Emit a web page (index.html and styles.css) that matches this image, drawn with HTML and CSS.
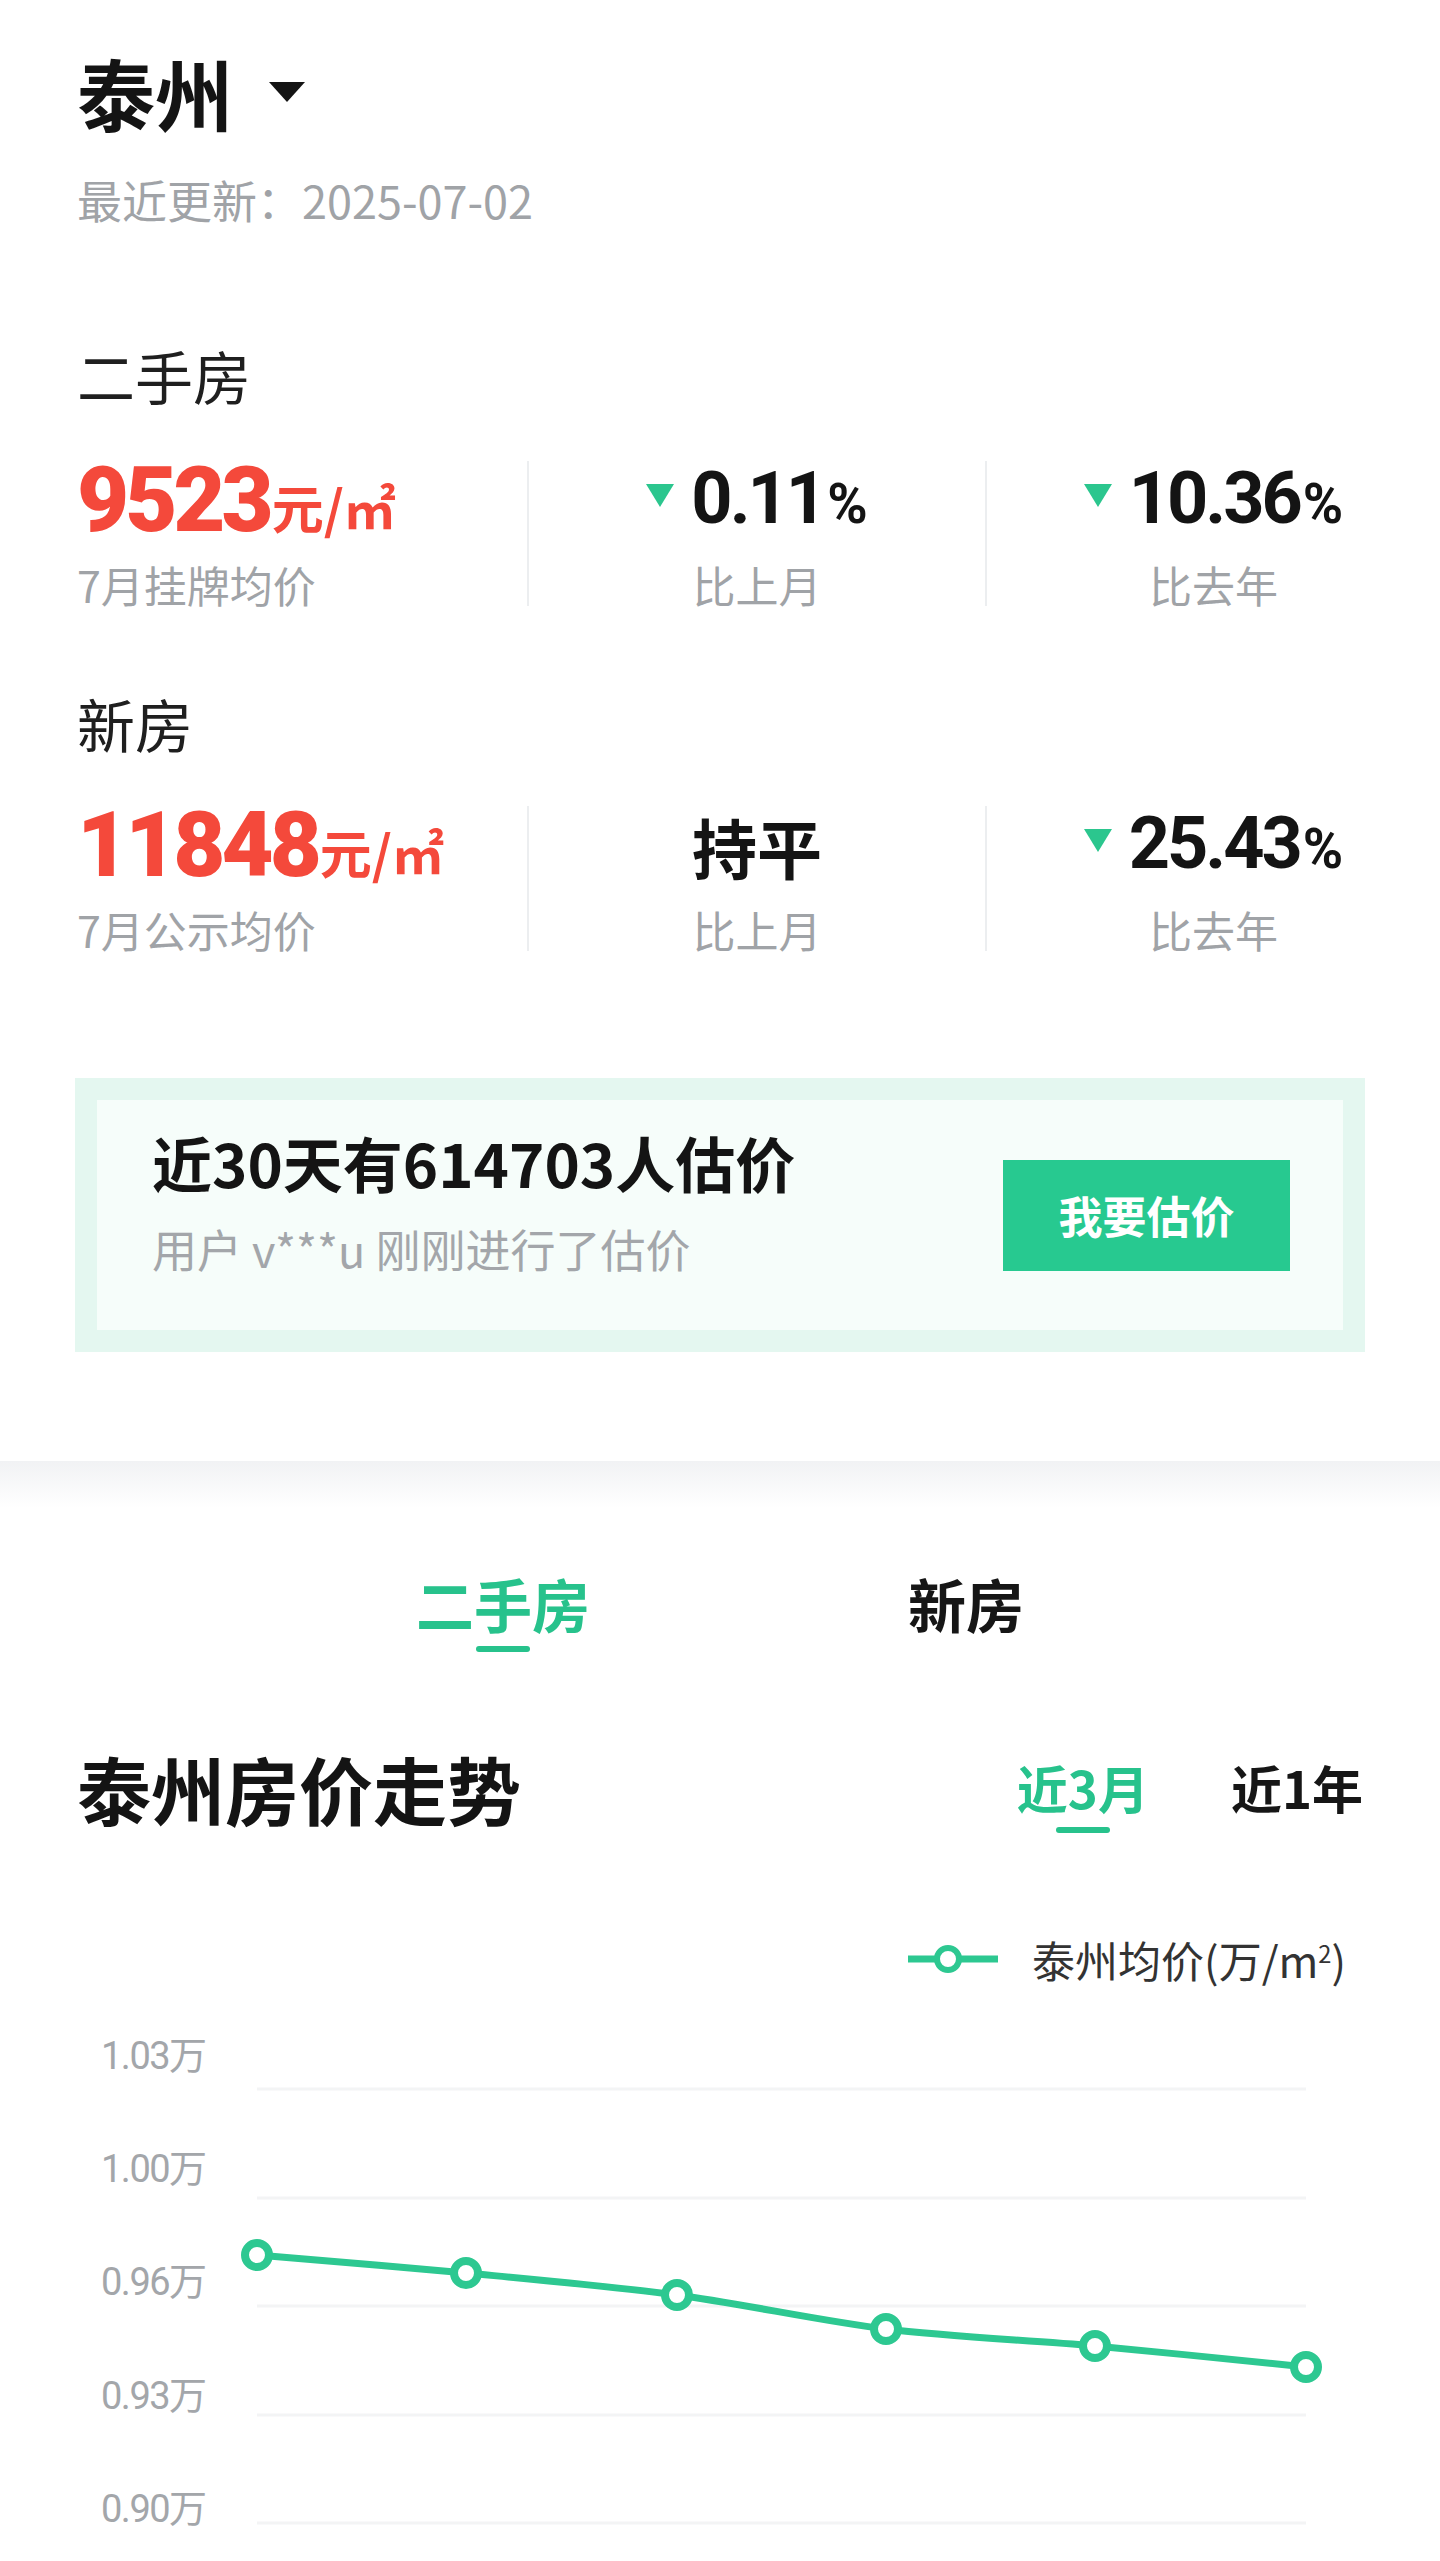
FILE: index.html
```html
<!DOCTYPE html>
<html lang="zh-CN">
<head>
<meta charset="utf-8">
<title>泰州房价</title>
<link rel="stylesheet" href="styles.css">
</head>
<body>
<div class="card">
  <div class="city-row">
    <h1 class="city">泰州</h1>
    <span class="caret"></span>
  </div>
  <div class="updated">最近更新：2025-07-02</div>

  <div class="cat cat-first">二手房</div>
  <div class="stats">
    <div class="stat stat-main">
      <div class="value"><span class="price">9523</span><span class="unit">元/㎡</span></div>
      <div class="label">7月挂牌均价</div>
    </div>
    <div class="stat">
      <div class="value"><span class="down"></span><span class="pct">0.11<small>%</small></span></div>
      <div class="label">比上月</div>
    </div>
    <div class="stat">
      <div class="value"><span class="down"></span><span class="pct">10.36<small>%</small></span></div>
      <div class="label">比去年</div>
    </div>
  </div>

  <div class="cat cat-second">新房</div>
  <div class="stats stats-second">
    <div class="stat stat-main">
      <div class="value"><span class="price">11848</span><span class="unit">元/㎡</span></div>
      <div class="label">7月公示均价</div>
    </div>
    <div class="stat">
      <div class="value"><span class="flat">持平</span></div>
      <div class="label">比上月</div>
    </div>
    <div class="stat">
      <div class="value"><span class="down"></span><span class="pct">25.43<small>%</small></span></div>
      <div class="label">比去年</div>
    </div>
  </div>

  <div class="banner">
    <div class="banner-inner">
      <div class="banner-text">
        <div class="banner-title">近30天有614703人估价</div>
        <div class="banner-sub">用户 v***u 刚刚进行了估价</div>
      </div>
      <div class="banner-btn">我要估价</div>
    </div>
  </div>
</div>
<div class="shade"></div>

<div class="tabs">
  <div class="tab active">二手房<span class="bar"></span></div>
  <div class="tab">新房</div>
</div>

<div class="trend-head">
  <h2 class="trend-title">泰州房价走势</h2>
  <div class="ranges">
    <div class="range active">近3月<span class="bar"></span></div>
    <div class="range">近1年</div>
  </div>
</div>

<div class="legend">
  <svg class="legend-icon" width="90" height="30" viewBox="0 0 90 30">
    <line x1="0" y1="15" x2="90" y2="15" stroke="#2dc891" stroke-width="7"/>
    <circle cx="40" cy="15" r="11" fill="#fff" stroke="#2dc891" stroke-width="6"/>
  </svg>
  <span class="legend-text">泰州均价(万/m<sup>2</sup>)</span>
</div>

<svg class="chart" width="1440" height="578" viewBox="0 0 1440 578">
  <g class="grid" stroke="#f3f4f5" stroke-width="3">
    <line x1="257" y1="108" x2="1306" y2="108"/>
    <line x1="257" y1="217" x2="1306" y2="217"/>
    <line x1="257" y1="325" x2="1306" y2="325"/>
    <line x1="257" y1="434" x2="1306" y2="434"/>
    <line x1="257" y1="542" x2="1306" y2="542"/>
  </g>
  <g class="axis">
    <text x="101" y="75">1.03万</text>
    <text x="101" y="188">1.00万</text>
    <text x="101" y="301">0.96万</text>
    <text x="101" y="415">0.93万</text>
    <text x="101" y="528">0.90万</text>
  </g>
  <path d="M257,274 C288.4,276.7 403,286 466,292 C529,298 614,305.6 677,314 C740,322.4 823.3,340.4 886,348 C948.7,355.7 1032,359.3 1095,365 C1158,370.7 1274.4,382.9 1306,386" fill="none" stroke="#2dc891" stroke-width="7" stroke-linecap="round"/>
  <g fill="#fff" stroke="#2dc891" stroke-width="8">
    <circle cx="257" cy="274" r="12"/>
    <circle cx="466" cy="292" r="12"/>
    <circle cx="677" cy="314" r="12"/>
    <circle cx="886" cy="348" r="12"/>
    <circle cx="1095" cy="365" r="12"/>
    <circle cx="1306" cy="386" r="12"/>
  </g>
</svg>
</body>
</html>
```

FILE: styles.css
```css
* { box-sizing: border-box; }
html, body {
  margin: 0;
  padding: 0;
  background: #fff;
  font-family: "Noto Sans CJK SC", "Noto Sans", sans-serif;
  color: #1a1a1a;
}
body { width: 1440px; overflow-x: hidden; }

.card {
  padding: 53px 0 109px 77px;
  background: #fff;
}

.city-row {
  display: flex;
  align-items: center;
  height: 78px;
}
.city {
  margin: 0;
  font-size: 78px;
  line-height: 78px;
  font-weight: 700;
  color: #141414;
}
.caret {
  margin-left: 36px;
  width: 0;
  height: 0;
  border-left: 18px solid transparent;
  border-right: 18px solid transparent;
  border-top: 20px solid #141414;
}
.updated {
  margin-top: 46px;
  font-size: 45px;
  line-height: 45px;
  color: #a0a3a7;
}

.cat {
  font-size: 58px;
  line-height: 58px;
  color: #1f1f1f;
}
.cat-first { margin-top: 124px; }
.cat-second { margin-top: 88px; }

.stats {
  display: grid;
  grid-template-columns: 450px 458px 1fr;
  margin-top: 57px;
}
.stats-second { margin-top: 54px; }
.stat {
  display: flex;
  flex-direction: column;
  align-items: center;
  border-left: 2px solid #eceef0;
}
.stat.stat-main {
  align-items: flex-start;
  border-left: none;
}
.value {
  display: flex;
  align-items: center;
  height: 80px;
}
.label {
  margin-top: 21px;
  font-size: 43px;
  line-height: 44px;
  color: #a0a3a7;
}
.price {
  font-family: "Roboto", "Noto Sans", sans-serif;
  font-weight: 900;
  font-size: 90px;
  line-height: 80px;
  letter-spacing: -4px;
  color: #f4493b;
}
.unit {
  font-weight: 700;
  font-size: 52px;
  line-height: 80px;
  color: #f4493b;
  margin-left: 2px;
  margin-top: 12px;
}
.down {
  width: 0;
  height: 0;
  border-left: 14px solid transparent;
  border-right: 14px solid transparent;
  border-top: 23px solid #2bc68e;
  margin-right: 17px;
  margin-top: -12px;
}
.pct {
  font-family: "Roboto", "Noto Sans", sans-serif;
  font-weight: 700;
  font-size: 72px;
  line-height: 80px;
  letter-spacing: -3px;
  color: #141414;
}
.pct small {
  font-size: 0.76em;
  letter-spacing: 0;
  margin-left: 3px;
}
.flat {
  font-weight: 700;
  font-size: 65px;
  line-height: 80px;
  color: #141414;
}

.banner {
  margin: 127px 75px 0 -2px;
  border: 22px solid #e4f7f0;
  background: #f6fdfa;
}
.banner-inner {
  height: 230px;
  display: flex;
  align-items: center;
  justify-content: space-between;
  padding: 0 53px 0 55px;
}
.banner-text { margin-bottom: 28px; }
.banner-title {
  font-size: 60px;
  line-height: 60px;
  font-weight: 700;
  color: #141414;
}
.banner-sub {
  margin-top: 35px;
  font-size: 45px;
  line-height: 44px;
  color: #a3a6aa;
}
.banner-btn {
  width: 287px;
  height: 111px;
  background: #27c990;
  color: #fff;
  font-size: 44px;
  font-weight: 700;
  display: flex;
  align-items: center;
  justify-content: center;
}

.shade {
  height: 47px;
  background: linear-gradient(#f1f2f4, #ffffff);
}

.tabs {
  display: flex;
  justify-content: center;
  gap: 318px;
  margin-top: 66px;
}
.tab, .range {
  display: flex;
  flex-direction: column;
  align-items: center;
  font-weight: 700;
  color: #161616;
}
.tab {
  font-size: 58px;
  line-height: 58px;
}
.tab.active, .range.active { color: #27c28c; }
.bar {
  display: block;
  width: 54px;
  height: 6px;
  border-radius: 3px;
  background: #27c28c;
}
.tab .bar { margin-top: 14px; }

.trend-head {
  display: flex;
  justify-content: space-between;
  align-items: flex-start;
  padding: 0 77px 0 77px;
  margin-top: 99px;
}
.trend-title {
  margin: 0;
  font-size: 74px;
  line-height: 74px;
  font-weight: 700;
  color: #141414;
}
.ranges {
  display: flex;
  gap: 82px;
  margin-top: 10px;
}
.range {
  font-size: 51px;
  line-height: 52px;
}
.range .bar { margin-top: 14px; }

.legend {
  display: flex;
  justify-content: flex-end;
  align-items: center;
  padding-right: 94px;
  margin-top: 104px;
  height: 44px;
}
.legend-icon { display: block; margin-right: 34px; }
.legend-text {
  font-size: 43px;
  line-height: 44px;
  color: #333;
}
.legend-text sup {
  font-size: 0.55em;
  line-height: 0;
}

.chart { display: block; }
.axis text {
  font-family: "Roboto", "Noto Sans CJK SC", sans-serif;
  font-size: 38px;
  letter-spacing: -1.5px;
  fill: #a3a6aa;
  dominant-baseline: central;
}
```
